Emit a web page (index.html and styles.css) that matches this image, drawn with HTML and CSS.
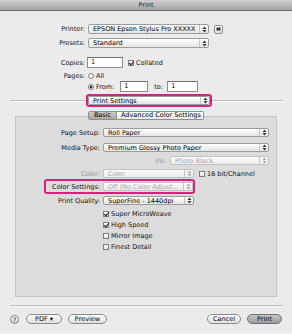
FILE: index.html
```html
<!DOCTYPE html>
<html lang="en">
<head>
  <meta charset="UTF-8">
  <title>Print</title>
  <link rel="stylesheet" href="styles.css">
</head>
<body>
<div class="window">
  <div class="titlebar">Print</div>

  <div class="top">
    <div class="row r-printer">
      <span class="label">Printer:</span>
      <span class="popup p-top">EPSON Epson Stylus Pro XXXXX<i class="arrows"><svg width="5" height="7" viewBox="0 0 5 7"><path d="M2.5 0.5L4.5 3H0.5Z M2.5 6.5L4.5 4H0.5Z" fill="#333"/></svg></i></span>
      <span class="disclose"><svg width="5" height="4" viewBox="0 0 5 4"><rect x="0.5" y="0.5" width="4" height="3" fill="#333"/></svg></span>
    </div>
    <div class="row r-presets">
      <span class="label">Presets:</span>
      <span class="popup p-top">Standard<i class="arrows"><svg width="5" height="7" viewBox="0 0 5 7"><path d="M2.5 0.5L4.5 3H0.5Z M2.5 6.5L4.5 4H0.5Z" fill="#333"/></svg></i></span>
    </div>
    <div class="row r-copies">
      <span class="label">Copies:</span>
      <span class="field f-copies">1</span>
      <span class="check on"></span>
      <span class="opt">Collated</span>
    </div>
    <div class="row r-all">
      <span class="label">Pages:</span>
      <span class="radio"></span>
      <span class="opt">All</span>
    </div>
    <div class="row r-from">
      <span class="label"></span>
      <span class="radio on"></span>
      <span class="opt">From:</span>
      <span class="field f-from">1</span>
      <span class="opt to">to:</span>
      <span class="field f-to">1</span>
    </div>
  </div>

  <div class="section">
    <span class="line l-left"></span>
    <span class="mark m-settings">
      <span class="popup p-settings">Print Settings<i class="arrows"><svg width="5" height="7" viewBox="0 0 5 7"><path d="M2.5 0.5L4.5 3H0.5Z M2.5 6.5L4.5 4H0.5Z" fill="#333"/></svg></i></span>
    </span>
    <span class="line l-right"></span>
  </div>

  <div class="tabs">
    <span class="tab sel">Basic</span>
    <span class="tab">Advanced Color Settings</span>
  </div>

  <div class="group">
    <div class="grow g-page">
      <span class="glabel">Page Setup:</span>
      <span class="popup p-full">Roll Paper<i class="arrows"><svg width="5" height="7" viewBox="0 0 5 7"><path d="M2.5 0.5L4.5 3H0.5Z M2.5 6.5L4.5 4H0.5Z" fill="#333"/></svg></i></span>
    </div>
    <div class="grow g-media">
      <span class="glabel">Media Type:</span>
      <span class="popup p-full">Premium Glossy Photo Paper<i class="arrows"><svg width="5" height="7" viewBox="0 0 5 7"><path d="M2.5 0.5L4.5 3H0.5Z M2.5 6.5L4.5 4H0.5Z" fill="#333"/></svg></i></span>
    </div>
    <div class="grow g-ink">
      <span class="glabel off ink-label">Ink:</span>
      <span class="popup off p-ink">Photo Black<i class="arrows"><svg width="5" height="7" viewBox="0 0 5 7"><path d="M2.5 0.5L4.5 3H0.5Z M2.5 6.5L4.5 4H0.5Z" fill="#aaa"/></svg></i></span>
    </div>
    <div class="grow g-color">
      <span class="glabel off">Color:</span>
      <span class="popup off p-half">Color<i class="arrows"><svg width="5" height="7" viewBox="0 0 5 7"><path d="M2.5 0.5L4.5 3H0.5Z M2.5 6.5L4.5 4H0.5Z" fill="#aaa"/></svg></i></span>
      <span class="check"></span>
      <span class="opt">16 bit/Channel</span>
    </div>
    <div class="grow g-settings">
      <span class="mark m-color">
        <span class="glabel cs-label">Color Settings:</span>
        <span class="popup off p-cs">Off (No Color Adjust...<i class="arrows"><svg width="5" height="7" viewBox="0 0 5 7"><path d="M2.5 0.5L4.5 3H0.5Z M2.5 6.5L4.5 4H0.5Z" fill="#aaa"/></svg></i></span>
      </span>
    </div>
    <div class="grow g-quality">
      <span class="glabel">Print Quality:</span>
      <span class="popup p-half">SuperFine - 1440dpi<i class="arrows"><svg width="5" height="7" viewBox="0 0 5 7"><path d="M2.5 0.5L4.5 3H0.5Z M2.5 6.5L4.5 4H0.5Z" fill="#333"/></svg></i></span>
    </div>
    <div class="checks">
      <div class="crow"><span class="check on"></span><span class="opt">Super MicroWeave</span></div>
      <div class="crow"><span class="check on"></span><span class="opt">High Speed</span></div>
      <div class="crow"><span class="check"></span><span class="opt">Mirror Image</span></div>
      <div class="crow"><span class="check"></span><span class="opt">Finest Detail</span></div>
    </div>
  </div>

  <div class="sep"></div>

  <div class="buttons">
    <span class="help">?</span>
    <span class="btn b-pdf">PDF &#9662;</span>
    <span class="btn b-preview">Preview</span>
    <span class="btn b-cancel">Cancel</span>
    <span class="btn b-print">Print</span>
  </div>
</div>
</body>
</html>
```

FILE: styles.css
```css
/* Base */
body {
  margin: 0;
  padding: 0;
  background-color: #ebebeb;
  font-family: "DejaVu Sans", sans-serif;
  font-size: 6.5px;
  color: #000;
}

.window {
  width: 292px;
  height: 334px;
  box-sizing: border-box;
  background-color: #ebebeb;
  border-bottom: 1px solid #f6f6f6;
  overflow: hidden;
}

/* Title bar */
.titlebar {
  height: 11px;
  box-sizing: border-box;
  line-height: 10px;
  text-align: center;
  color: #2a2a2a;
  background: linear-gradient(#cfcfcf, #a3a3a3);
  border-bottom: 1px solid #6f6f6f;
}

/* Top form */
.top {
  padding-top: 13px;
}

.row {
  display: flex;
  align-items: center;
  height: 10px;
}

.label {
  width: 85px;
  margin-right: 3px;
  text-align: right;
  color: #111;
  flex: none;
}

.r-presets { margin-top: 4px; }
.r-copies { margin-top: 9px; height: 11px; }
.r-all { margin-top: 3px; }
.r-from { height: 11px; }

/* Popup buttons */
.popup {
  display: flex;
  align-items: center;
  height: 10px;
  box-sizing: border-box;
  padding-left: 4px;
  border: 1px solid #9b9b9b;
  border-radius: 2px;
  background: linear-gradient(#ffffff, #e4e4e4);
  white-space: nowrap;
  overflow: hidden;
  flex: none;
}

.popup .arrows {
  margin-left: auto;
  width: 8px;
  height: 100%;
  display: flex;
  align-items: center;
  justify-content: center;
  border-left: 1px solid #c4c4c4;
}

.popup.off {
  color: #a8a8a8;
  border-color: #c2c2c2;
  background: linear-gradient(#fbfbfb, #ececec);
}

.p-top { width: 121px; }
.p-settings { width: 122px; height: 9px; }
.p-full { width: 166px; height: 9px; }
.p-ink { width: 99px; height: 9px; }
.p-half { width: 91px; height: 9px; }
.p-cs { width: 90px; height: 9px; }

.disclose {
  width: 9px;
  height: 9px;
  margin-left: 5px;
  box-sizing: border-box;
  border: 1px solid #8f8f8f;
  border-radius: 2px;
  background: linear-gradient(#ffffff, #dcdcdc);
  display: flex;
  align-items: center;
  justify-content: center;
}

/* Fields, checks, radios */
.field {
  height: 11px;
  box-sizing: border-box;
  border: 1px solid #8d8d8d;
  border-top-color: #6d6d6d;
  background: #fff;
  padding-left: 3px;
  line-height: 9px;
  flex: none;
}

.f-copies { width: 36px; margin-left: -1px; }
.f-from { width: 28px; margin-left: 6px; }
.f-to { width: 31px; }

.opt {
  color: #111;
  white-space: nowrap;
}

.to { margin-left: 6px; width: 13px; }

.check {
  width: 6px;
  height: 6px;
  box-sizing: border-box;
  border: 1px solid #7c7c7c;
  background: linear-gradient(#fff, #e2e2e2);
  margin: 0 2px 0 5px;
  position: relative;
  flex: none;
}

.check.on::after {
  content: "";
  position: absolute;
  left: 1px;
  top: -1px;
  width: 2px;
  height: 4px;
  border: solid #222;
  border-width: 0 1.5px 1.5px 0;
  transform: rotate(40deg);
}

.radio {
  width: 6px;
  height: 6px;
  box-sizing: border-box;
  border: 1px solid #7c7c7c;
  border-radius: 50%;
  background: #fff;
  margin-right: 2px;
  flex: none;
}

.radio.on {
  background: radial-gradient(circle, #222 0 1.3px, #dcdcdc 1.6px);
}

/* Print Settings separator */
.section {
  display: flex;
  align-items: center;
  height: 13px;
  margin-top: 2px;
}

.line {
  height: 1px;
  background: #bdbdbd;
  border-bottom: 1px solid #f8f8f8;
}

.l-left { width: 76px; margin-left: 10px; }
.l-right { width: 71px; }

.mark {
  display: flex;
  align-items: center;
  border: 2px solid #d3237e;
  border-radius: 3px;
  box-sizing: border-box;
}

.m-settings {
  width: 126px;
  height: 13px;
}

/* Tabs */
.tabs {
  display: flex;
  justify-content: center;
  margin-top: 4px;
  margin-bottom: -4px;
  position: relative;
  z-index: 1;
}

.tab {
  height: 9px;
  box-sizing: border-box;
  line-height: 7px;
  border: 1px solid #8f8f8f;
  background: linear-gradient(#ffffff, #e6e6e6);
  padding: 0 4px;
  white-space: nowrap;
}

.tab.sel {
  width: 29px;
  text-align: center;
  background: linear-gradient(#c9c9c9, #a9a9a9);
  border-radius: 2px 0 0 2px;
}

.tab + .tab {
  width: 87px;
  border-left: none;
  border-radius: 0 2px 2px 0;
  text-align: center;
}

/* Group box */
.group {
  margin: 0 15px;
  height: 181px;
  box-sizing: border-box;
  border: 1px solid #c4c4c4;
  background: #dcdcdc;
  padding-top: 11px;
}

.grow {
  display: flex;
  align-items: center;
  height: 9px;
}

.glabel {
  width: 84px;
  margin-right: 3px;
  text-align: right;
  color: #111;
  white-space: nowrap;
  flex: none;
}

.glabel.off { color: #9a9a9a; }
.ink-label { width: 151px; }

.g-media { margin-top: 6px; }
.g-ink { margin-top: 4px; }
.g-color { margin-top: 4px; }
.g-settings { margin-top: 1px; height: 15px; }
.g-quality { margin-top: 2px; }

.m-color {
  margin-left: 28px;
  width: 151px;
  height: 15px;
}

.cs-label { width: 54px; }

.checks {
  margin-top: 3px;
  padding-left: 82px;
}

.crow {
  display: flex;
  align-items: center;
  height: 11px;
}

/* Bottom */
.sep {
  height: 1px;
  margin: 8px 9px 0 10px;
  background: #bdbdbd;
  border-bottom: 1px solid #f8f8f8;
}

.buttons {
  display: flex;
  align-items: center;
  margin-top: 7px;
  padding: 0 10px;
  height: 10px;
}

.help {
  width: 9px;
  height: 9px;
  box-sizing: border-box;
  border: 1px solid #7c7c7c;
  border-radius: 50%;
  background: linear-gradient(#ffffff, #d8d8d8);
  font-size: 6px;
  line-height: 7px;
  text-align: center;
  margin-right: 7px;
}

.btn {
  height: 10px;
  box-sizing: border-box;
  border: 1px solid #8a8a8a;
  border-radius: 5px;
  background: linear-gradient(#ffffff, #dedede);
  line-height: 8px;
  text-align: center;
}

.b-pdf { width: 36px; }
.b-preview { width: 39px; margin-left: 6px; }
.b-cancel { width: 34px; margin-left: auto; }
.b-print {
  width: 35px;
  margin-left: 6px;
  background: linear-gradient(#c6c6c6, #9c9c9c);
  border-color: #6f6f6f;
}
```
